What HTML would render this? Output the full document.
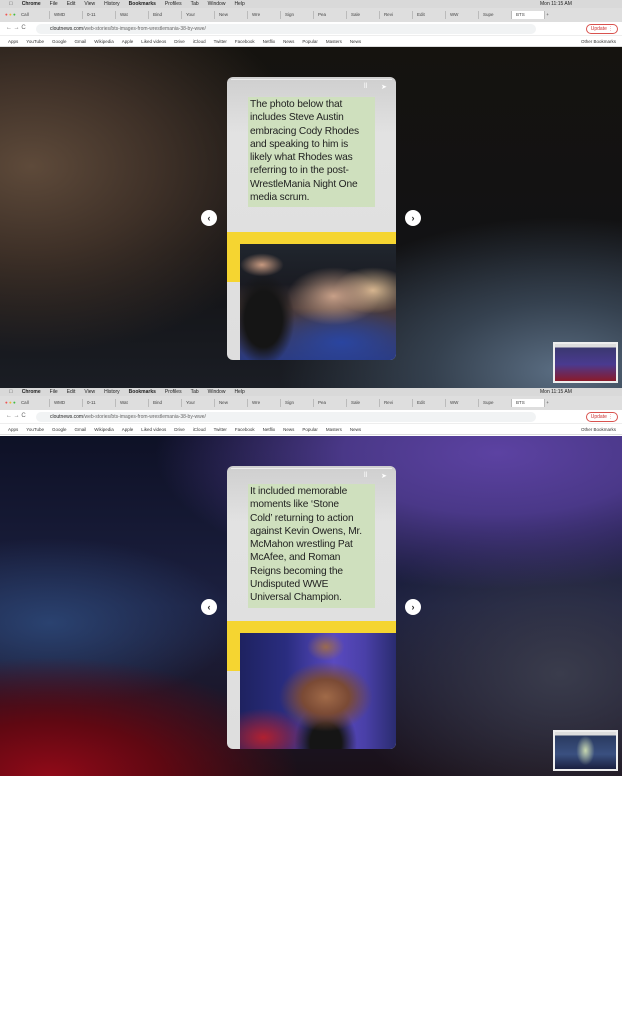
<!DOCTYPE html>
<html><head><meta charset="utf-8"><style>
*{margin:0;padding:0;box-sizing:border-box}
body{width:622px;height:1024px;background:#fff;position:relative;overflow:hidden;font-family:"Liberation Sans",sans-serif}
.shot{position:absolute;left:0;width:622px;height:388px;overflow:hidden}
.menu{position:absolute;left:0;top:0;width:622px;height:8px;background:#d9d9d9;font-size:5px;line-height:8px;color:#222;white-space:nowrap}
.menu span{margin-left:9px}
.tabs{position:absolute;top:8px;left:0;width:622px;height:14px;background:#dedede;font-size:4.5px;line-height:14px;color:#444;white-space:nowrap}
.tab{display:inline-block;width:33px;padding-left:4px;border-right:1px solid #bbb;height:8px;line-height:8px;margin-top:3px}
.addr{position:absolute;top:22px;left:0;width:622px;height:14px;background:#fff;border-bottom:1px solid #eee}
.url{position:absolute;left:36px;top:2px;width:500px;height:10px;background:#f1f3f4;border-radius:5px;font-size:5px;line-height:10px;padding-left:14px;color:#666}
.url b{color:#222;font-weight:normal}
.upd{position:absolute;right:4px;top:2px;width:32px;height:10px;border:1px solid #d9534f;border-radius:5px;font-size:5px;line-height:8px;color:#c33;text-align:center}
.bm{position:absolute;top:36px;left:0;width:622px;height:11px;background:#fff;font-size:4.5px;line-height:11px;color:#333;white-space:nowrap;border-bottom:1px solid #ddd}
.bm span{margin-left:8px}
.content{position:absolute;top:47px;left:0;width:622px;height:341px}
.card{position:absolute;left:227px;width:169px;height:283px;border-radius:6px;background:linear-gradient(180deg,#cfcfcf,#e2e2e2 20%,#dedede);overflow:hidden}
.txt{position:absolute;left:21px;top:20px;width:127px;background:#cfe0be;font-family:"Liberation Sans",sans-serif;font-size:10.2px;line-height:13.3px;color:#222;padding:1px 2px 3px;white-space:nowrap;letter-spacing:-0.15px}
.yb{position:absolute;left:0;width:169px;height:13px;background:#f5d531}
.yl{position:absolute;left:0;width:13px;background:#f5d531}
.photo{position:absolute;left:13px;width:156px}
.prog{position:absolute;top:2px;left:4px;width:161px;height:1px;background:rgba(255,255,255,.6)}
.ic{position:absolute;top:6px;font-size:7px;color:#fff}
.arrow{position:absolute;width:16px;height:16px;border-radius:50%;background:#fff;font-size:9px;line-height:16px;text-align:center;color:#222;font-weight:bold}
.thumb{position:absolute;left:553px;width:65px;height:41px;border:2px solid #eee;}
</style></head><body>

<!-- SHOT 1 -->
<div class="shot" style="top:0">
 <div class="content" style="background:radial-gradient(ellipse 45% 55% at 5% 35%,#5e4a3a 0%,#3f3128 45%,transparent 100%),radial-gradient(ellipse 45% 45% at 90% 95%,#5a6d82 0%,#35414f 45%,transparent 100%),linear-gradient(180deg,#15130f,#121214 60%,#1a1d24)"></div>
 <div class="menu"><span style="font-weight:bold">&#63743;</span><span style="font-weight:bold">Chrome</span><span>File</span><span>Edit</span><span>View</span><span>History</span><span style="font-weight:bold">Bookmarks</span><span>Profiles</span><span>Tab</span><span>Window</span><span>Help</span><span style="position:absolute;left:540px;margin:0">Mon 11:15 AM</span></div>
 <div class="tabs"><span style="color:#e55;margin-left:5px">● <span style="color:#eb3">●</span> <span style="color:#4b4">●</span></span>
  <div class="tab">Call</div><div class="tab">WMD</div><div class="tab">0-11</div><div class="tab">Wat</div><div class="tab">Bind</div><div class="tab">Your</div><div class="tab">New</div><div class="tab">Wre</div><div class="tab">Sign</div><div class="tab">Pea</div><div class="tab">Sale</div><div class="tab">Revi</div><div class="tab">Edit</div><div class="tab">WW</div><div class="tab">Supe</div><div class="tab" style="background:#fff">BTS</div> +</div>
 <div class="addr"><span style="position:absolute;left:6px;top:3px;font-size:6px;color:#666">← → C</span><div class="url"><b>cloutnews.com</b>/web-stories/bts-images-from-wrestlemania-38-by-wwe/</div><div class="upd">Update ⋮</div></div>
 <div class="bm"><span>Apps</span><span>YouTube</span><span>Google</span><span>Gmail</span><span>Wikipedia</span><span>Apple</span><span>Liked videos</span><span>Drive</span><span>iCloud</span><span>Twitter</span><span>Facebook</span><span>Netflix</span><span>News</span><span>Popular</span><span>Masters</span><span>News</span><span style="position:absolute;right:6px">Other Bookmarks</span></div>
 <div class="card" style="top:77px">
  <div class="prog"></div><div class="ic" style="left:137px">ll</div><div class="ic" style="left:154px">➤</div>
  <div class="txt">The photo below that<br>includes Steve Austin<br>embracing Cody Rhodes<br>and speaking to him is<br>likely what Rhodes was<br>referring to in the post-<br>WrestleMania Night One<br>media scrum.</div>
  <div class="yb" style="top:155px"></div><div class="yl" style="top:155px;height:50px"></div>
  <div class="photo" style="top:167px;height:116px;background:
   radial-gradient(ellipse 14% 10% at 14% 18%,#c89a80 0%,transparent 100%),
   radial-gradient(ellipse 20% 40% at 15% 65%,#151515 60%,transparent 100%),
   radial-gradient(ellipse 30% 25% at 60% 45%,#c8a088 0%,transparent 100%),
   radial-gradient(ellipse 25% 20% at 85% 40%,#d8b890 0%,transparent 100%),
   radial-gradient(ellipse 50% 30% at 65% 85%,#2a45a0 0%,transparent 100%),
   linear-gradient(180deg,#20262e,#1a1b22 35%,#4a3a38 55%,#2a3a80)"></div>
 </div>
 <div class="arrow" style="left:201px;top:210px">‹</div>
 <div class="arrow" style="left:405px;top:210px">›</div>
 <div class="thumb" style="top:342px;background:linear-gradient(180deg,#ddd 0 10%,#3a3870 10%,#4a3a90 55%,#8a1a2a)"></div>
</div>

<!-- SHOT 2 -->
<div class="shot" style="top:388px">
 <div class="content" style="top:48px;height:340px;background:
  radial-gradient(ellipse 40% 35% at 8% 100%,#900a18 0%,#600812 45%,transparent 100%),
  radial-gradient(ellipse 55% 40% at 80% 5%,#5c42a2 0%,#4a3888 45%,transparent 100%),
  radial-gradient(ellipse 30% 25% at 8% 55%,#2a4270 0%,transparent 100%),
  radial-gradient(ellipse 35% 45% at 90% 70%,#3a3c4c 0%,transparent 100%),
  linear-gradient(180deg,#0e1126,#1c2040 50%,#1a1018)"></div>
 <div class="menu"><span style="font-weight:bold">&#63743;</span><span style="font-weight:bold">Chrome</span><span>File</span><span>Edit</span><span>View</span><span>History</span><span style="font-weight:bold">Bookmarks</span><span>Profiles</span><span>Tab</span><span>Window</span><span>Help</span><span style="position:absolute;left:540px;margin:0">Mon 11:15 AM</span></div>
 <div class="tabs"><span style="color:#e55;margin-left:5px">● <span style="color:#eb3">●</span> <span style="color:#4b4">●</span></span>
  <div class="tab">Call</div><div class="tab">WMD</div><div class="tab">0-11</div><div class="tab">Wat</div><div class="tab">Bind</div><div class="tab">Your</div><div class="tab">New</div><div class="tab">Wre</div><div class="tab">Sign</div><div class="tab">Pea</div><div class="tab">Sale</div><div class="tab">Revi</div><div class="tab">Edit</div><div class="tab">WW</div><div class="tab">Supe</div><div class="tab" style="background:#fff">BTS</div> +</div>
 <div class="addr"><span style="position:absolute;left:6px;top:3px;font-size:6px;color:#666">← → C</span><div class="url"><b>cloutnews.com</b>/web-stories/bts-images-from-wrestlemania-38-by-wwe/</div><div class="upd">Update ⋮</div></div>
 <div class="bm"><span>Apps</span><span>YouTube</span><span>Google</span><span>Gmail</span><span>Wikipedia</span><span>Apple</span><span>Liked videos</span><span>Drive</span><span>iCloud</span><span>Twitter</span><span>Facebook</span><span>Netflix</span><span>News</span><span>Popular</span><span>Masters</span><span>News</span><span style="position:absolute;right:6px">Other Bookmarks</span></div>
 <div class="card" style="top:78px">
  <div class="prog"></div><div class="ic" style="left:137px">ll</div><div class="ic" style="left:154px">➤</div>
  <div class="txt" style="top:18px">It included memorable<br>moments like ‘Stone<br>Cold’ returning to action<br>against Kevin Owens, Mr.<br>McMahon wrestling Pat<br>McAfee, and Roman<br>Reigns becoming the<br>Undisputed WWE<br>Universal Champion.</div>
  <div class="yb" style="top:155px;height:12px"></div><div class="yl" style="top:155px;height:50px"></div>
  <div class="photo" style="top:167px;height:116px;background:
   radial-gradient(ellipse 12% 12% at 55% 12%,#9a6a50 0%,transparent 100%),
   radial-gradient(ellipse 30% 30% at 55% 55%,#a06a48 0%,#7a4a35 50%,transparent 100%),
   radial-gradient(ellipse 20% 35% at 55% 95%,#151515 50%,transparent 100%),
   radial-gradient(ellipse 30% 25% at 15% 90%,#b02030 0%,transparent 100%),
   linear-gradient(90deg,#1e2260,#2a2d80 30%,#5a4ac0 60%,#4a40a8 80%,#2a2c70)"></div>
 </div>
 <div class="arrow" style="left:201px;top:211px">‹</div>
 <div class="arrow" style="left:405px;top:211px">›</div>
 <div class="thumb" style="top:342px;background:radial-gradient(ellipse 15% 40% at 50% 50%,#c8d8b0 0%,transparent 100%),linear-gradient(180deg,#ddd 0 10%,#2a3a60 10%,#3a5080 60%,#1a2040)"></div>
</div>
</body></html>
